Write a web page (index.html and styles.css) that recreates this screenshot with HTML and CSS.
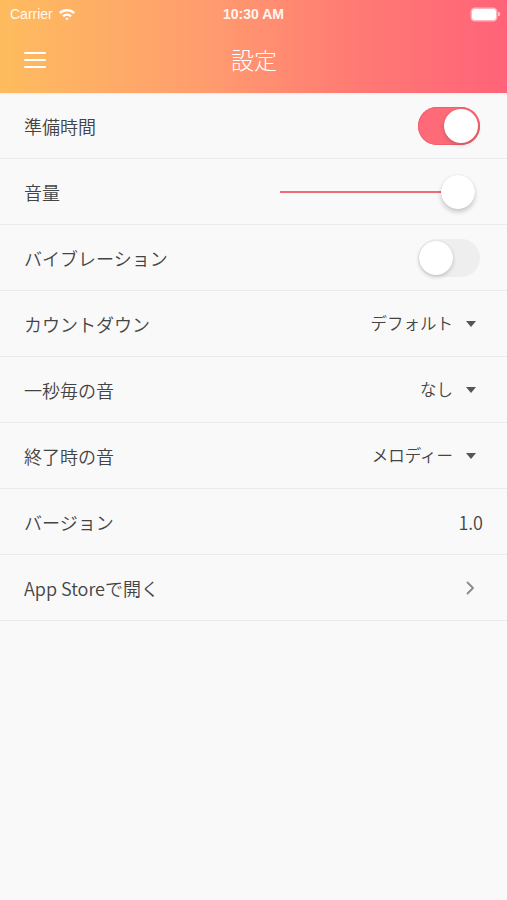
FILE: index.html
```html
<!DOCTYPE html>
<html lang="ja">
<head>
<meta charset="utf-8">
<title>設定</title>
<link rel="stylesheet" href="styles.css">
</head>
<body>
<header class="header">
  <div class="status">
    <div class="status-left">
      <span class="carrier">Carrier</span>
      <svg class="wifi" width="18" height="14" viewBox="0 0 18 14">
        <path d="M1 5.2 A11.5 11.5 0 0 1 17 5.2 L15.2 7 A9 9 0 0 0 2.8 7 Z" fill="#fff"/>
        <path d="M4.2 8.4 A7 7 0 0 1 13.8 8.4 L12 10.2 A4.4 4.4 0 0 0 6 10.2 Z" fill="#fff"/>
        <path d="M7.3 11.5 A2.4 2.4 0 0 1 10.7 11.5 L9 13.3 Z" fill="#fff"/>
      </svg>
    </div>
    <span class="time">10:30 AM</span>
    <div class="battery"><span class="battery-body"></span><span class="battery-tip"></span></div>
  </div>
  <div class="nav">
    <div class="menu"><span></span><span></span><span></span></div>
    <h1 class="title">設定</h1>
  </div>
</header>
<main class="list">
  <div class="row">
    <span class="label">準備時間</span>
    <div class="switch on"><span class="knob"></span></div>
  </div>
  <div class="row">
    <span class="label">音量</span>
    <div class="slider"><span class="track"></span><span class="thumb"></span></div>
  </div>
  <div class="row">
    <span class="label">バイブレーション</span>
    <div class="switch"><span class="knob"></span></div>
  </div>
  <div class="row">
    <span class="label">カウントダウン</span>
    <div class="select"><span>デフォルト</span><span class="caret"></span></div>
  </div>
  <div class="row">
    <span class="label">一秒毎の音</span>
    <div class="select"><span>なし</span><span class="caret"></span></div>
  </div>
  <div class="row">
    <span class="label">終了時の音</span>
    <div class="select"><span>メロディー</span><span class="caret"></span></div>
  </div>
  <div class="row">
    <span class="label">バージョン</span>
    <span class="value">1.0</span>
  </div>
  <div class="row">
    <span class="label">App Storeで開く</span>
    <svg class="chevron" width="9" height="14" viewBox="0 0 9 14">
      <path d="M1.5 1.5 L7 7 L1.5 12.5" fill="none" stroke="#8a8a8a" stroke-width="1.8" stroke-linecap="round" stroke-linejoin="round"/>
    </svg>
  </div>
</main>
</body>
</html>
```

FILE: styles.css
```css
* { box-sizing: border-box; }
html, body { margin: 0; padding: 0; }
body {
  width: 507px;
  min-height: 900px;
  background: #f9f9f9;
  font-family: "Noto Sans CJK JP", "Noto Sans", sans-serif;
  font-weight: 350;
  color: #444444;
}
.header {
  height: 93px;
  background: linear-gradient(90deg, #febc5e 0%, #ff9d6e 40%, #ff7a74 70%, #ff6379 100%);
  color: #fff;
  box-shadow: 0 1px 2px rgba(0,0,0,0.06);
}
.status {
  height: 28px;
  display: flex;
  align-items: center;
  justify-content: space-between;
  padding: 0 7px 0 10px;
  position: relative;
}
.status-left { display: flex; align-items: center; gap: 5px; width: 100px; }
.carrier {
  font-family: "Liberation Sans", "Noto Sans", sans-serif;
  font-weight: normal;
  font-size: 14px;
  opacity: 0.92;
}
.wifi { margin-top: -1px; }
.time {
  font-family: "Liberation Sans", "Noto Sans", sans-serif;
  font-size: 14px;
  font-weight: bold;
  opacity: 0.92;
  position: absolute;
  left: 0; right: 0;
  text-align: center;
  pointer-events: none;
}
.battery { display: flex; align-items: center; width: 100px; justify-content: flex-end; gap: 1px; }
.battery-body {
  width: 24px; height: 11px;
  background: #fff;
  border-radius: 3px;
  box-shadow: 0 0 0 1.5px rgba(255,255,255,0.5);
}
.battery-tip { width: 2px; height: 4px; background: rgba(255,255,255,0.6); border-radius: 0 1px 1px 0; margin-left: 1px; }
.nav {
  height: 65px;
  display: flex;
  align-items: center;
  position: relative;
  padding-left: 24px;
}
.menu { display: flex; flex-direction: column; gap: 5px; width: 22px; margin-top: -2px; }
.menu span { display: block; height: 2px; background: #fff; border-radius: 1px; }
.title {
  position: absolute;
  left: 0; right: 0;
  margin: 0;
  text-align: center;
  font-size: 23px;
  font-weight: 300;
  line-height: 1;
  margin-top: -2px;
  padding-left: 1px;
}
.list { display: flex; flex-direction: column; }
.row {
  height: 66px;
  border-bottom: 1px solid #ebebeb;
  display: flex;
  align-items: center;
  justify-content: space-between;
  padding: 0 24px 0 24px;
}
.label { font-size: 18px; line-height: 1; }
.value { font-size: 18px; line-height: 1; }
.switch {
  width: 62px; height: 38px;
  border-radius: 19px;
  background: #eeeeee;
  position: relative;
  margin-right: 3px;
}
.switch.on { background: #fe6a78; box-shadow: inset 0 0 0 1px #f25f6f; }
.switch .knob {
  position: absolute;
  top: 2px; left: 1px;
  width: 34px; height: 34px;
  border-radius: 50%;
  background: #fff;
  box-shadow: 0 2px 4px rgba(0,0,0,0.18), 0 0 1px rgba(0,0,0,0.12);
}
.switch.on .knob { left: 26px; }
.slider {
  width: 195px; height: 36px;
  position: relative;
  margin-right: 8px;
}
.slider .track {
  position: absolute;
  left: 0; right: 17px;
  top: 17px;
  height: 2px;
  background: #f06a79;
}
.slider .thumb {
  position: absolute;
  right: 0; top: 1px;
  width: 34px; height: 34px;
  border-radius: 50%;
  background: #fff;
  box-shadow: 0 3px 5px rgba(0,0,0,0.2), 0 0 1px rgba(0,0,0,0.15);
}
.select {
  display: flex;
  align-items: center;
  gap: 13px;
  font-size: 16.5px;
  line-height: 1;
  margin-right: 7px;
}
.caret {
  width: 0; height: 0;
  border-left: 5px solid transparent;
  border-right: 5px solid transparent;
  border-top: 6px solid #555;
}
.chevron { margin-right: 8px; }
```
